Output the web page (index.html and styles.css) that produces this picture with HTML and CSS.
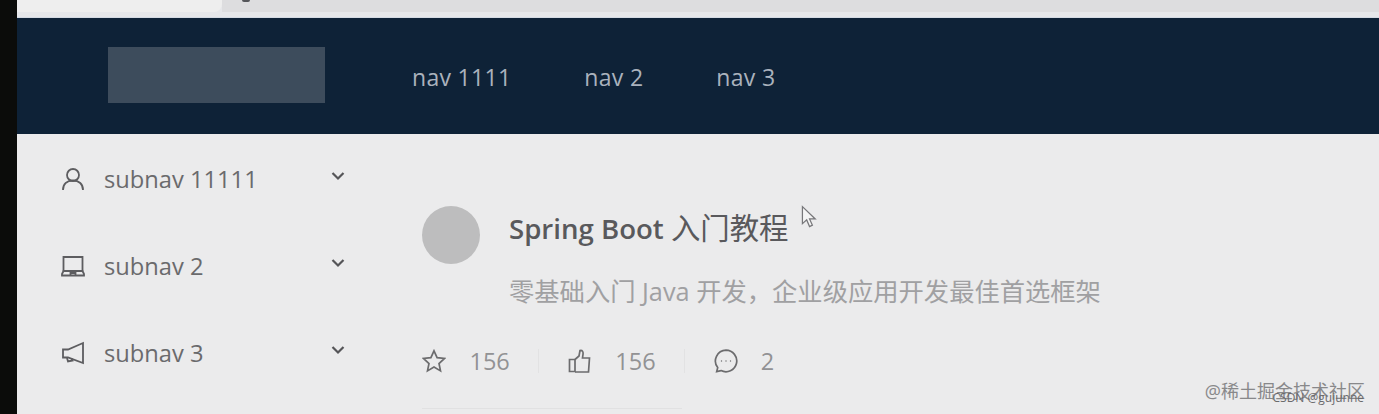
FILE: index.html
```html
<!DOCTYPE html>
<html lang="zh">
<head>
  <meta charset="UTF-8" />
  <title>Spring Boot 入门教程</title>
  <link rel="stylesheet" href="styles.css">
</head>
<body>
  <div class="edge"></div>

  <div class="page">
    <!-- barra del navegador, cortada -->
    <div class="browser-strip">
      <div class="strip-left"></div>
      <div class="strip-address"></div>
    </div>

    <nav class="navbar">
      <div class="logo"></div>
      <ul class="nav-links">
        <li>nav 1111</li>
        <li>nav 2</li>
        <li>nav 3</li>
      </ul>
    </nav>

    <div class="body-row">
      <!-- menu lateral -->
      <aside class="sidebar">
        <div class="sub-item">
          <svg class="sub-icon" viewBox="0 0 24 24"><circle cx="12" cy="8" r="6"/><path d="M2 23c0-6 4-9.500 10-9.500S22 17 22 23"/></svg>
          <span class="sub-label">subnav 11111</span>
          <svg class="chevron" viewBox="0 0 14 10"><path d="M1.500 2l5.500 5.500L12.500 2"/></svg>
        </div>
        <div class="sub-item">
          <svg class="sub-icon" viewBox="0 0 24 24"><path d="M2.500 17V3h19v14"/><path d="M1 21.500V20l1.500-3h19l1.500 3v1.500z"/><path d="M9.500 21v-2h5v2"/></svg>
          <span class="sub-label">subnav 2</span>
          <svg class="chevron" viewBox="0 0 14 10"><path d="M1.500 2l5.500 5.500L12.500 2"/></svg>
        </div>
        <div class="sub-item">
          <svg class="sub-icon" viewBox="0 0 24 24"><path d="M22 2v20L7 16.500H2v-8h5z"/><path d="M6 17l1 3.500 4.500-1 -1-2"/></svg>
          <span class="sub-label">subnav 3</span>
          <svg class="chevron" viewBox="0 0 14 10"><path d="M1.500 2l5.500 5.500L12.500 2"/></svg>
        </div>
      </aside>

      <!-- articulo -->
      <main class="content">
        <div class="post">
          <div class="avatar"></div>
          <div class="post-text">
            <h2 class="post-title">Spring Boot <span class="title-cjk">入门教程</span></h2>
            <p class="post-desc">零基础入门 Java 开发，企业级应用开发最佳首选框架</p>
          </div>
        </div>
        <div class="actions">
          <div class="action">
            <svg class="action-icon" viewBox="0 0 24 24"><path d="M12 1.800l3.100 6.900 7.400.8-5.500 5 1.500 7.400-6.500-3.800-6.500 3.800 1.500-7.400-5.500-5 7.400-.8z"/></svg>
            <span>156</span>
          </div>
          <div class="action">
            <svg class="action-icon" viewBox="0 0 24 24"><path d="M1.500 10.500h5.500v12H1.500z"/><path d="M7 10.500l4-3.500 1-5.500c2.500-.5 3.500 1.500 3 4l-.5 3.500h7l-1 14H7"/></svg>
            <span>156</span>
          </div>
          <div class="action action-comment">
            <svg class="action-icon" viewBox="0 0 24 24"><path d="M12 1.200a10.800 10.800 0 1 1-5 20.400l-4.300 1 1-4A10.800 10.800 0 0 1 12 1.200z"/><circle class="dot" cx="7.500" cy="12" r=".7"/><circle class="dot" cx="12" cy="12" r=".7"/><circle class="dot" cx="16.500" cy="12" r=".7"/></svg>
            <span>2</span>
          </div>
        </div>
        <div class="post-line"></div>
      </main>
    </div>
  </div>

  <!-- cursor del video -->
  <svg class="cursor" viewBox="0 0 20 26"><path d="M1.500 1v18l4.500-4 3 7 3-1.500-3-6.500h6z"/></svg>

  <!-- marcas de agua -->
  <div class="mark-juejin">@稀土掘金技术社区</div>
  <div class="mark-csdn">CSDN @gujunne</div>
</body>
</html>
```

FILE: styles.css
```css
body {
  margin: 0;
  height: 414px;
  display: flex;
  overflow: hidden;
  background-color: #ebebec;
  font-family: "Open Sans", "Noto Sans CJK SC", sans-serif;
}

.edge {
  width: 17px;
  flex-shrink: 0;
  background-color: #0b0c0a;
}

.page {
  flex: 1;
  display: flex;
  flex-direction: column;
  min-width: 0;
}

.browser-strip {
  height: 18px;
  display: flex;
  background-color: #e6e7ea;
  border-bottom: 1px solid #d5dbe4;
  box-sizing: border-box;
}

.strip-left {
  width: 205px;
  height: 12px;
  background-color: #eeeeee;
  border-bottom-right-radius: 8px;
}

.strip-address {
  flex: 1;
  height: 12px;
  background-color: #dddddf;
}

/* resto del icono cortado por el borde */
.strip-address::before {
  content: "";
  display: block;
  width: 8px;
  height: 2px;
  margin-left: 20px;
  border-radius: 0 0 4px 4px;
  background-color: #55565a;
}

.navbar {
  height: 116px;
  display: flex;
  align-items: center;
  padding: 0 0 2px 91px;
  box-sizing: border-box;
  background-color: #0e2237;
  color: #aab2bd;
}

.logo {
  width: 217px;
  height: 56px;
  background-color: #3d4c5c;
}

.nav-links {
  list-style-type: none;
  display: flex;
  gap: 73px;
  margin: 3px 0 0 87px;
  padding: 0;
  font-size: 23px;
  letter-spacing: 0.3px;
}

.body-row {
  flex: 1;
  display: flex;
  min-height: 0;
}

.sidebar {
  width: 330px;
  flex-shrink: 0;
  padding: 2px 0 0 44px;
  box-sizing: border-box;
}

.sub-item {
  height: 86.700px;
  display: flex;
  align-items: center;
  color: #6a6a6c;
  font-size: 23.700px;
}

.sub-icon {
  width: 24px;
  height: 24px;
  fill: none;
  stroke: #5d5d60;
  stroke-width: 1.800;
  margin-right: 19px;
  flex-shrink: 0;
}

.sub-label {
  flex: 1;
}

.chevron {
  width: 14px;
  height: 10px;
  margin: -6px 2px 0 0;
  fill: none;
  stroke: #555558;
  stroke-width: 2.200;
}

.content {
  flex: 1;
  padding: 72px 0 0 75px;
}

.post {
  display: flex;
  gap: 29px;
}

.avatar {
  width: 58px;
  height: 58px;
  border-radius: 50%;
  background-color: #bdbdbe;
  flex-shrink: 0;
}

.post-title {
  margin: 2px 0 0 0;
  font-size: 27.600px;
  line-height: 40px;
  font-weight: 600;
  color: #59595c;
}

.title-cjk {
  font-size: 29.400px;
  font-weight: 400;
}

.post-desc {
  margin: 26px 0 0 0;
  font-size: 25.300px;
  line-height: 34px;
  color: #a0a0a2;
}

.actions {
  display: flex;
  margin-top: 41px;
  font-size: 23.500px;
  color: #929294;
}

.action {
  display: flex;
  align-items: center;
  gap: 23.500px;
  padding-right: 28px;
  margin-right: 29px;
  border-right: 1px solid #e2e2e3;
  height: 24px;
}

.action-comment {
  gap: 23px;
  border-right: none;
}

.action-icon {
  width: 24px;
  height: 24px;
  fill: none;
  stroke: #6c6c6e;
  stroke-width: 1.700;
}

.action-icon .dot {
  fill: #6c6c6e;
  stroke: none;
}

.post-line {
  width: 260px;
  height: 1px;
  margin-top: 35px;
  background-color: #e1e1e2;
}

.cursor {
  position: absolute;
  left: 801px;
  top: 205px;
  width: 19px;
  height: 26px;
  fill: #f4f4f4;
  stroke: #77777a;
  stroke-width: 1.300;
}

.mark-juejin {
  position: absolute;
  right: 14px;
  top: 377px;
  font-size: 18px;
  color: #88888a;
  white-space: nowrap;
}

.mark-csdn {
  position: absolute;
  right: 15px;
  top: 389px;
  font-size: 12px;
  color: #6a6a6c;
  white-space: nowrap;
}
```
